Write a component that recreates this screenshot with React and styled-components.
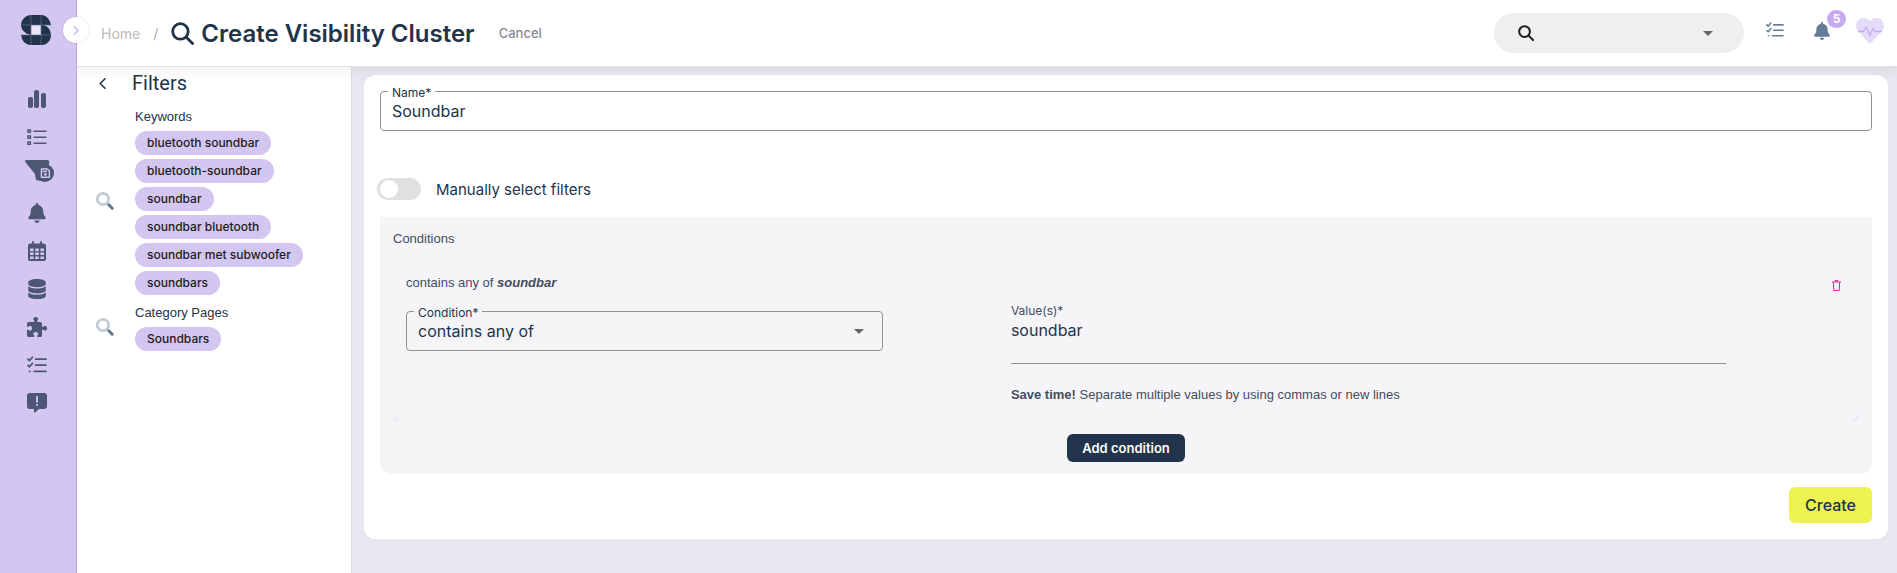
import React, { useState } from "react";
import styled, { createGlobalStyle } from "styled-components";
import { FaBell, FaDatabase, FaPuzzlePiece } from "react-icons/fa6";

const keywords = [
  "bluetooth soundbar",
  "bluetooth-soundbar",
  "soundbar",
  "soundbar bluetooth",
  "soundbar met subwoofer",
  "soundbars",
];

const LogoIcon = () => (
  <svg width="30" height="30" viewBox="0 0 90 90" aria-hidden="true">
    <path
      fill="#21344b"
      d="M28 0H64Q84 3 90 30H60V30H66Q88 34 90 60V64Q86 88 64 90H26Q4 86 0 60H30V60Q6 56 0 34V28Q4 4 28 0Z"
    />
    <path fill="#ece4fa" d="M30 30H60V60H30Z" />
    <path
      stroke="#66708f"
      strokeWidth="2"
      fill="none"
      d="M30 0V90M60 0V90M0 30H90M0 60H90"
    />
  </svg>
);

const BarsIcon = () => (
  <svg width="18" height="18" viewBox="0 0 18 18" fill="currentColor" aria-hidden="true">
    <rect x="0" y="7" width="5" height="11" rx="2" />
    <rect x="6" y="0" width="5" height="18" rx="2" />
    <rect x="13" y="3" width="5" height="15" rx="2" />
  </svg>
);

const ListIcon = () => (
  <svg width="20" height="18" viewBox="0 0 20 18" fill="none" stroke="currentColor" aria-hidden="true">
    <path strokeWidth="1.4" d="M1 2h2.4v2.4H1zM1 8h2.4v2.4H1zM1 14h2.4v2.4H1z" />
    <path strokeWidth="1.4" strokeLinecap="round" d="M7 3.2h12M7 9.2h12M7 15.2h12" />
  </svg>
);

const SavedFilterIcon = () => (
  <svg width="36" height="30" viewBox="-6 0 36 30" aria-hidden="true">
    <path fill="currentColor" d="M1 0H23Q25 1 24 4L22 19Q16 22 11 20L10 14L1 3Q-1 0 1 0Z" />
    <circle cx="20" cy="13" r="9" fill="currentColor" />
    <path
      fill="none"
      stroke="#d3c6f1"
      strokeWidth="1.4"
      strokeLinejoin="round"
      d="M16.4 9h6l2 2v6.2h-8z"
    />
    <path stroke="#d3c6f1" strokeWidth="1.5" d="M17.5 11.400h4.500" />
    <circle cx="20.4" cy="14.400" r="1.300" fill="#d3c6f1" />
  </svg>
);

const CalendarIcon = () => (
  <svg width="18" height="20" viewBox="0 0 18 20" aria-hidden="true">
    <rect y="2.400" width="18" height="17.600" rx="2.600" fill="currentColor" />
    <path
      stroke="currentColor"
      strokeWidth="1.8"
      strokeLinecap="round"
      d="M5 1V4M13 1V4"
    />
    <path
      fill="#d3c6f1"
      d="M2 7.600h3.600v2.600H2zM7.200 7.600h3.600v2.600H7.200zM12.400 7.600H16v2.600h-3.600zM2 11.600h3.600v2.400H2zM7.200 11.600h3.600v2.400H7.200zM12.400 11.600H16v2.400h-3.600zM2 15.400h3.600V18H2.600Q2 18 2 17.400zM7.200 15.400h3.600V18H7.200zM12.400 15.400H16v2q0 .6-.6.6h-3z"
    />
  </svg>
);

const TasksIcon = ({ size = 20 }) => (
  <svg
    width={size}
    height={size * 0.9}
    viewBox="0 0 20 18"
    fill="none"
    stroke="currentColor"
    strokeWidth="1.7"
    strokeLinecap="round"
    strokeLinejoin="round"
    aria-hidden="true"
  >
    <path d="M1 3.2l1.4 1.4L5.4 1.2M1 9.4l1.4 1.4L5.4 7.4M8.6 3.2H19M8.6 9.2H19M7.2 15.4H19M2.6 15.4h.2" />
  </svg>
);

const AlertIcon = () => (
  <svg width="20" height="20" viewBox="0 0 20 20" aria-hidden="true">
    <path
      fill="currentColor"
      d="M3 0H17Q20 0 20 3V13Q20 16 17 16H12L8 19.6Q7 20.2 7 19V16H3Q0 16 0 13V3Q0 0 3 0Z"
    />
    <path stroke="#d3c6f1" strokeWidth="1.8" strokeLinecap="round" d="M10 3.6V9" />
    <circle cx="10" cy="12" r="1.1" fill="#d3c6f1" />
  </svg>
);

const SearchIcon = ({ size, width = 3 }) => (
  <svg
    width={size}
    height={size}
    viewBox="0 0 22 22"
    fill="none"
    stroke="currentColor"
    strokeWidth={width}
    strokeLinecap="round"
    aria-hidden="true"
  >
    <circle cx="9" cy="9" r="7.4" />
    <path d="M14.6 14.6L20.6 20.6" />
  </svg>
);

const DuoSearchIcon = () => (
  <svg width="18" height="18" viewBox="0 0 18 18" fill="none" aria-hidden="true">
    <circle cx="7" cy="7" r="5.7" stroke="#c3cbd5" strokeWidth="2.700" />
    <path stroke="#5f7690" strokeWidth="3" strokeLinecap="round" d="M12.800 12.800L16.200 16.200" />
  </svg>
);

const Chevron = ({ left, width, height }) => (
  <svg width={width} height={height} viewBox="0 0 7 11" fill="none" aria-hidden="true">
    <path
      d={left ? "M6 0.8L1.2 5.5L6 10.2" : "M1.2 0.8L6 5.5L1.2 10.2"}
      stroke="currentColor"
      strokeWidth="1.6"
      strokeLinecap="round"
      strokeLinejoin="round"
    />
  </svg>
);

const Caret = () => (
  <svg width="10" height="5" viewBox="0 0 10 5" aria-hidden="true">
    <path fill="#666" d="M0 0h10L5 5z" />
  </svg>
);

const HeartIcon = () => (
  <svg width="28" height="26" viewBox="0 0 28 26" fill="none" aria-hidden="true">
    <path
      fill="#e5dbfa"
      d="M14 3C17-0.6 22.5-0.8 25.6 2C28.6 5 28.7 9.8 26 13L15.4 24.4Q14 25.8 12.6 24.4L2 13C-0.7 9.8-0.6 5 2.4 2C5.5-0.8 11-0.6 14 3Z"
    />
    <path
      stroke="#c4aaf0"
      strokeWidth="1.3"
      strokeLinejoin="round"
      d="M2 13.5H7.5L10.2 9L13.8 17.6L17 10.2L18.8 13.5H26"
    />
  </svg>
);

const TrashIcon = () => (
  <svg width="9" height="11" viewBox="0 0 9 11" fill="none" stroke="#f0148c" aria-hidden="true">
    <path d="M0 2h9M3 1.5V0.6h3v0.9M1.4 2.4L1.8 10.4H7.2L7.6 2.4" />
  </svg>
);

const navItems = [
  { label: "Dashboards", icon: <BarsIcon /> },
  { label: "Lists", icon: <ListIcon /> },
  { label: "Saved filters", icon: <SavedFilterIcon /> },
  { label: "Alerts", icon: <FaBell size={20} /> },
  { label: "Calendar", icon: <CalendarIcon /> },
  { label: "Data", icon: <FaDatabase size={20} /> },
  { label: "Integrations", icon: <FaPuzzlePiece size={20} /> },
  { label: "Tasks", icon: <TasksIcon /> },
  { label: "Feedback", icon: <AlertIcon /> },
];

const Sidebar = () => (
  <Side>
    <Logo href="#" aria-label="Home">
      <LogoIcon />
    </Logo>
    <Nav>
      {navItems.map((item) => (
        <NavLink key={item.label} href="#" aria-label={item.label}>
          {item.icon}
        </NavLink>
      ))}
    </Nav>
    <ExpandButton type="button" aria-label="Expand menu">
      <Chevron width={6} height={9} />
    </ExpandButton>
  </Side>
);

const Header = () => (
  <TopBar>
    <Crumb href="#">Home</Crumb>
    <Slash>/</Slash>
    <Title>
      <SearchIcon size={23} width={2.7} />
      Create Visibility Cluster
    </Title>
    <CancelButton type="button">Cancel</CancelButton>
    <TopSearch type="button" aria-label="Search">
      <SearchIcon size={16} width={2.8} />
      <Caret />
    </TopSearch>
    <TopActions>
      <IconButton type="button" aria-label="Tasks" $color="#667c97">
        <TasksIcon size={18} />
      </IconButton>
      <IconButton type="button" aria-label="Notifications" $color="#667c97">
        <FaBell size={18} />
        <Badge>5</Badge>
      </IconButton>
      <IconButton type="button" aria-label="Health">
        <HeartIcon />
      </IconButton>
    </TopActions>
  </TopBar>
);

const FilterSection = ({ title, items }) => (
  <Section>
    <DuoSearchIcon />
    <SectionBody>
      <SectionTitle>{title}</SectionTitle>
      {items.map((item) => (
        <Chip key={item}>{item}</Chip>
      ))}
    </SectionBody>
  </Section>
);

const Filters = () => (
  <FilterPanel>
    <FilterHead>
      <BackButton type="button" aria-label="Collapse filters">
        <Chevron left width={7} height={11} />
      </BackButton>
      <FilterTitle>Filters</FilterTitle>
    </FilterHead>
    <FilterSection title="Keywords" items={keywords} />
    <FilterSection title="Category Pages" items={["Soundbars"]} />
  </FilterPanel>
);

const App = () => {
  const [name, setName] = useState("Soundbar");
  const [manual, setManual] = useState(false);
  const [values, setValues] = useState("soundbar");

  return (
    <>
      <GlobalStyle />
      <Page>
        <Sidebar />
        <Main>
          <Header />
          <Content>
            <Filters />
            <Workspace>
              <Card onSubmit={(e) => e.preventDefault()}>
                <Outlined>
                  <FloatLabel htmlFor="name" $bg="#fff">
                    Name*
                  </FloatLabel>
                  <TextInput id="name" value={name} onChange={(e) => setName(e.target.value)} />
                </Outlined>
                <ToggleRow>
                  <Toggle
                    type="checkbox"
                    role="switch"
                    checked={manual}
                    onChange={(e) => setManual(e.target.checked)}
                  />
                  Manually select filters
                </ToggleRow>
                <Conditions>
                  <ConditionsTitle>Conditions</ConditionsTitle>
                  <ConditionBack>
                    <Condition>
                      <Summary>
                        contains any of <b>{values}</b>
                      </Summary>
                      <DeleteButton type="button" aria-label="Delete condition">
                        <TrashIcon />
                      </DeleteButton>
                      <ConditionFields>
                        <Outlined>
                          <FloatLabel htmlFor="condition" $bg="#f5f5f8">
                            Condition*
                          </FloatLabel>
                          <Select id="condition" defaultValue="any">
                            <option value="any">contains any of</option>
                            <option value="all">contains all of</option>
                          </Select>
                          <SelectCaret>
                            <Caret />
                          </SelectCaret>
                        </Outlined>
                        <ValueField>
                          <ValueLabel htmlFor="values">Value(s)*</ValueLabel>
                          <ValueArea
                            id="values"
                            value={values}
                            onChange={(e) => setValues(e.target.value)}
                          />
                          <Hint>
                            <strong>Save time!</strong> Separate multiple values by using commas or
                            new lines
                          </Hint>
                        </ValueField>
                      </ConditionFields>
                    </Condition>
                  </ConditionBack>
                  <AddButton type="button">Add condition</AddButton>
                </Conditions>
                <CreateButton type="submit">Create</CreateButton>
              </Card>
            </Workspace>
          </Content>
        </Main>
      </Page>
    </>
  );
};

export default App;

const GlobalStyle = createGlobalStyle`
  * {
    box-sizing: border-box;
  }

  body {
    margin: 0;
    color: #22344b;
    font-family: Inter, "Liberation Sans", sans-serif;
    font-size: 12px;
  }

  button,
  input,
  select,
  textarea {
    color: inherit;
    font-family: inherit;
  }

  button {
    padding: 0;
    border: 0;
    background: none;
    cursor: pointer;
  }

  a {
    color: inherit;
    text-decoration: none;
  }

  svg {
    display: block;
    flex-shrink: 0;
  }
`;

const Page = styled.div`
  display: flex;
  min-height: 100vh;
`;

const Side = styled.aside`
  position: relative;
  z-index: 3;
  width: 77px;
  flex-shrink: 0;
  padding-top: 15px;
  border-right: 1px solid #b9a9db;
  background: #d3c6f1;
`;

const Logo = styled.a`
  display: block;
  margin-left: 21px;
`;

const Nav = styled.nav`
  display: flex;
  flex-direction: column;
  margin-top: 35px;
  padding-right: 2px;
`;

const NavLink = styled.a`
  display: flex;
  align-items: center;
  justify-content: center;
  height: 38px;
  color: #4d5672;
`;

const ExpandButton = styled.button`
  position: absolute;
  top: 17px;
  right: -13px;
  display: flex;
  align-items: center;
  justify-content: center;
  width: 26px;
  height: 26px;
  border-radius: 50%;
  background: #fff;
  box-shadow: 0 0 2px rgba(0, 0, 0, 0.2);
  color: #c4aaf0;
`;

const Main = styled.div`
  display: flex;
  flex: 1;
  flex-direction: column;
  min-width: 0;
`;

const TopBar = styled.header`
  position: relative;
  z-index: 2;
  display: flex;
  align-items: center;
  height: 67px;
  padding: 0 13px 0 24px;
  border-bottom: 1px solid #e2e0ec;
  background: #fff;
  box-shadow: 0 2px 14px rgba(0, 0, 0, 0.08);
`;

const Crumb = styled.a`
  color: #bbb;
  font-size: 14px;
`;

const Slash = styled.span`
  margin: 0 13px;
  color: #aaa;
  font-size: 14px;
`;

const Title = styled.h1`
  display: flex;
  align-items: center;
  gap: 7px;
  margin: 0;
  font-size: 24px;
  font-weight: 600;
  white-space: nowrap;
`;

const CancelButton = styled.button`
  margin-left: 24px;
  color: #858c97;
  font-size: 13px;
  font-weight: 500;
`;

const TopSearch = styled.button`
  display: flex;
  align-items: center;
  justify-content: space-between;
  width: 250px;
  height: 40px;
  margin-left: auto;
  padding: 0 31px 0 24px;
  border-radius: 20px;
  background: #efefef;
  color: #1c1c1c;
`;

const TopActions = styled.div`
  display: flex;
  align-items: center;
  gap: 29px;
  margin-left: 22px;
  padding-bottom: 5px;
`;

const IconButton = styled.button`
  position: relative;
  color: ${(props) => props.$color || "inherit"};

  &:last-child {
    margin-left: -4px;
  }
`;

const Badge = styled.span`
  position: absolute;
  top: -12px;
  left: 14px;
  width: 19px;
  height: 18px;
  border-radius: 9px;
  background: #c4aaf0;
  color: #fff;
  font-size: 12px;
  font-weight: 700;
  line-height: 18px;
  text-align: center;
`;

const Content = styled.div`
  display: flex;
  flex: 1;
`;

const FilterPanel = styled.section`
  width: 275px;
  flex-shrink: 0;
  border-right: 1px solid #dadae0;
  background: #fff;
`;

const FilterHead = styled.div`
  display: flex;
  align-items: center;
  height: 32px;
  margin-bottom: 8px;
  padding-left: 22px;
`;

const BackButton = styled.button`
  margin-right: 26px;
`;

const FilterTitle = styled.h2`
  margin: 0;
  font-family: Roboto, "Liberation Sans", sans-serif;
  font-size: 20px;
  font-weight: 400;
`;

const Section = styled.div`
  display: flex;
  align-items: center;
  gap: 21px;
  margin-bottom: 8px;
  padding-left: 19px;
`;

const SectionBody = styled.div`
  display: flex;
  flex-direction: column;
  align-items: flex-start;
  gap: 4px;
`;

const SectionTitle = styled.h3`
  margin: 0;
  font-family: "Liberation Sans", sans-serif;
  font-size: 13px;
  font-weight: 400;
  line-height: 20px;
`;

const Chip = styled.span`
  padding: 0 12px;
  border-radius: 12px;
  background: #d3c6f1;
  color: #1c1b22;
  font-size: 12px;
  font-weight: 500;
  line-height: 24px;
`;

const Workspace = styled.main`
  flex: 1;
  min-width: 0;
  padding: 8px 9px 34px 12px;
  background: #e7e7f0;
`;

const Card = styled.form`
  display: flex;
  flex-direction: column;
  padding: 16px;
  border-radius: 12px;
  background: #fff;
`;

const Outlined = styled.div`
  position: relative;
  display: flex;
  align-self: start;
  width: 100%;
  height: 40px;
  border: 1px solid #919196;
  border-radius: 4px;
`;

const FloatLabel = styled.label`
  position: absolute;
  top: -7px;
  left: 7px;
  padding: 0 4px;
  background: ${(props) => props.$bg};
  line-height: 16px;
`;

const TextInput = styled.input`
  width: 100%;
  padding: 0 11px;
  border: 0;
  outline: 0;
  background: none;
  font-size: 16px;
`;

const ToggleRow = styled.label`
  display: flex;
  align-items: center;
  gap: 15px;
  align-self: flex-start;
  height: 24px;
  margin: 46px 0 16px -3px;
  font-size: 15px;
`;

const Toggle = styled.input`
  appearance: none;
  width: 44px;
  height: 22px;
  margin: 0;
  padding: 2px 3px;
  border-radius: 11px;
  background: #e0e0e0;

  &::before {
    content: "";
    display: block;
    width: 18px;
    height: 18px;
    border-radius: 50%;
    background: #fff;
  }

  &:checked {
    padding-left: 23px;
    background: #c4aaf0;
  }
`;

const Conditions = styled.section`
  display: flex;
  flex-direction: column;
  padding: 12px 13px;
  border-radius: 0 0 12px 12px;
  background: #f5f5f8;
`;

const ConditionsTitle = styled.h2`
  margin: 0;
  color: #3f4d63;
  font-family: "Liberation Sans", sans-serif;
  font-size: 13px;
  font-weight: 400;
  line-height: 20px;
`;

const ConditionBack = styled.div`
  margin-top: 12px;
  background: linear-gradient(#f5f5f8 50%, #ececf5 50%);
`;

const Condition = styled.div`
  display: grid;
  grid-template-columns: 1fr auto;
  align-items: center;
  padding: 12px 18px 16px 13px;
  border-radius: 12px;
  background: #f5f5f8;
`;

const Summary = styled.p`
  margin: 0;
  color: #3f4d63;
  font-family: "Liberation Sans", sans-serif;
  font-size: 13px;
  line-height: 20px;

  b {
    font-style: italic;
  }
`;

const DeleteButton = styled.button`
  padding-top: 4px;
`;

const ConditionFields = styled.div`
  display: grid;
  grid-column: 1 / -1;
  grid-template-columns: 2fr 3fr;
  gap: 128px;
  margin-top: 18px;
  padding-right: 8%;
`;

const Select = styled.select`
  appearance: none;
  width: 100%;
  padding: 0 11px;
  border: 0;
  outline: 0;
  background: none;
  font-size: 16px;
`;

const SelectCaret = styled.span`
  position: absolute;
  top: 17px;
  right: 18px;
  pointer-events: none;
`;

const ValueField = styled.div`
  display: flex;
  flex-direction: column;
`;

const ValueLabel = styled.label`
  margin-top: -8px;
  color: #3f4d63;
  line-height: 16px;
`;

const ValueArea = styled.textarea`
  height: 45px;
  padding: 0;
  border: 0;
  border-bottom: 1px solid #919196;
  outline: 0;
  background: none;
  font-size: 16px;
  line-height: 22px;
  resize: none;
`;

const Hint = styled.p`
  margin: 21px 0 0;
  color: #3f4d63;
  font-family: "Liberation Sans", sans-serif;
  font-size: 13px;
  line-height: 20px;
`;

const AddButton = styled.button`
  align-self: center;
  height: 28px;
  margin-top: 13px;
  padding: 0 15px;
  border-radius: 6px;
  background: #21344b;
  color: #fff;
  font-size: 13px;
  font-weight: 600;
`;

const CreateButton = styled.button`
  align-self: flex-end;
  height: 36px;
  margin-top: 13px;
  padding: 0 16px;
  border-radius: 6px;
  background: #ecf250;
  font-size: 16px;
  font-weight: 500;
`;
